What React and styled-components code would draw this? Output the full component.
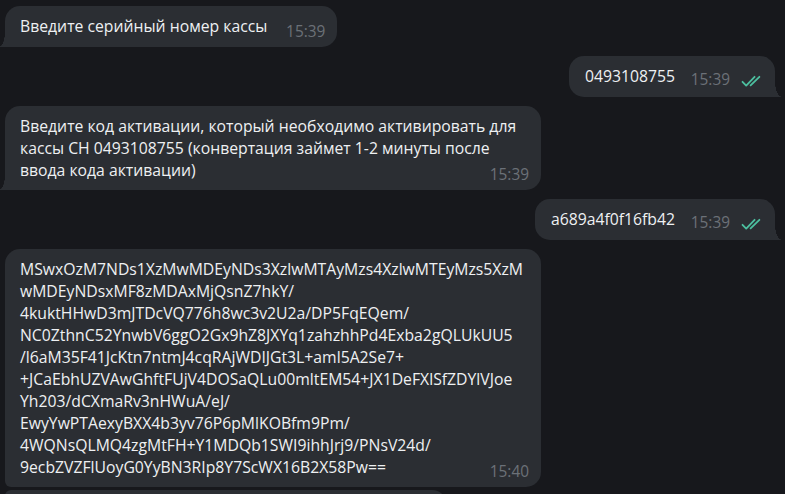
import React from "react";
import styled, { createGlobalStyle, css } from "styled-components";

const GlobalStyle = createGlobalStyle`
	html, body {
		margin: 0;
		padding: 0;
		background: #17181c;
	}
	body {
		font-family: "Open Sans", "Noto Sans", sans-serif;
		-webkit-font-smoothing: antialiased;
	}
`;

const BUBBLE = "#2b2e33";

const Chat = styled.div`
	display: flex;
	flex-direction: column;
	width: 785px;
	height: 494px;
	padding: 6px 10px 0 5px;
	box-sizing: border-box;
	overflow: hidden;
	background: #17181c;
`;

const Row = styled.div`
	display: flex;
	justify-content: ${p => (p.$out ? "flex-end" : "flex-start")};
	margin-top: ${p => (p.$grouped ? "3px" : "9px")};
	&:first-child {
		margin-top: 0;
	}
`;

const Bubble = styled.div`
	position: relative;
	display: grid;
	flex-shrink: 0;
	box-sizing: border-box;
	width: ${p => (p.$wide ? "536px" : "auto")};
	min-height: 41px;
	padding: 9px 12px 9px 15px;
	background: ${BUBBLE};
	border-radius: 15px;
	color: #eef0f2;
	font-size: 15.75px;
	line-height: 22px;
	${p => p.$out && css`padding-left: 16px;`}
	${p =>
		p.$tail &&
		!p.$out &&
		css`
			border-bottom-left-radius: 0;
			&::before {
				content: "";
				position: absolute;
				left: -6px;
				bottom: 0;
				width: 6px;
				height: 15px;
				background: radial-gradient(6px 15px at 0 0, transparent 97%, ${BUBBLE} 100%);
			}
		`}
	${p =>
		p.$tail &&
		p.$out &&
		css`
			border-bottom-right-radius: 0;
			&::before {
				content: "";
				position: absolute;
				right: -7px;
				bottom: 0;
				width: 7px;
				height: 15px;
				background: radial-gradient(7px 15px at 100% 0, transparent 97%, ${BUBBLE} 100%);
			}
		`}
	${p => p.$groupTop && css`border-top-left-radius: 6px;`}
	${p => p.$groupBottom && css`border-bottom-left-radius: 6px;`}
`;

const Text = styled.div`
	grid-area: 1 / 1;
	white-space: nowrap;
	padding-right: 2px;
`;

const Spacer = styled.span`
	display: inline-block;
	width: ${p => p.$w}px;
`;

const Meta = styled.div`
	grid-area: 1 / 1;
	justify-self: end;
	align-self: end;
	display: flex;
	align-items: center;
	gap: 11px;
	line-height: 12px;
`;

const Time = styled.span`
	color: #6b7178;
	font-size: 15.4px;
`;

function Ticks() {
	return (
		<svg width="22" height="13" viewBox="0 0 22 13" fill="none" style={{ marginTop: 3 }}>
			<path d="M1.5 6.8 L5.2 10.6 L13.6 1.8" stroke="#4cbf9f" strokeWidth="1.8" strokeLinecap="round" strokeLinejoin="round" />
			<path d="M9.6 10.4 L18.4 1.8" stroke="#4cbf9f" strokeWidth="1.8" strokeLinecap="round" />
		</svg>
	);
}

function Message({ lines, time, out, tail, wide, grouped, groupTop, groupBottom }) {
	return (
		<Row $out={out} $grouped={grouped}>
			<Bubble $out={out} $tail={tail} $wide={wide} $groupTop={groupTop} $groupBottom={groupBottom}>
				<Text>
					{lines.map((l, i) => (
						<React.Fragment key={i}>
							{l}
							{i < lines.length - 1 ? <br /> : <Spacer $w={out ? 86 : 56} />}
						</React.Fragment>
					))}
				</Text>
				{time && (
					<Meta>
						<Time>{time}</Time>
						{out && <Ticks />}
					</Meta>
				)}
			</Bubble>
		</Row>
	);
}

const code = [
	"MSwxOzM7NDs1XzMwMDEyNDs3XzlwMTAyMzs4XzlwMTEyMzs5XzM",
	"wMDEyNDsxMF8zMDAxMjQsnZ7hkY/",
	"4kuktHHwD3mJTDcVQ776h8wc3v2U2a/DP5FqEQem/",
	"NC0ZthnC52YnwbV6ggO2Gx9hZ8JXYq1zahzhhPd4Exba2gQLUkUU5",
	"/l6aM35F41JcKtn7ntmJ4cqRAjWDIJGt3L+aml5A2Se7+",
	"+JCaEbhUZVAwGhftFUjV4DOSaQLu00mltEM54+JX1DeFXlSfZDYlVJoe",
	"Yh203/dCXmaRv3nHWuA/eJ/",
	"EwyYwPTAexyBXX4b3yv76P6pMlKOBfm9Pm/",
	"4WQNsQLMQ4zgMtFH+Y1MDQb1SWI9ihhJrj9/PNsV24d/",
	"9ecbZVZFlUoyG0YyBN3RIp8Y7ScWX16B2X58Pw==",
];

export default function App() {
	return (
		<>
			<GlobalStyle />
			<Chat>
				<Message lines={["Введите серийный номер кассы"]} time="15:39" tail />
				<Message lines={["0493108755"]} time="15:39" out tail />
				<Message
					lines={[
						"Введите код активации, который необходимо активировать для",
						"кассы СН 0493108755 (конвертация займет 1-2 минуты после",
						"ввода кода активации)",
					]}
					time="15:39"
					tail
					wide
				/>
				<Message lines={["a689a4f0f16fb42"]} time="15:39" out tail />
				<Message lines={code} time="15:40" wide groupBottom />
				<Row $grouped>
					<Bubble $groupTop style={{ width: 442 }} />
				</Row>
			</Chat>
		</>
	);
}
